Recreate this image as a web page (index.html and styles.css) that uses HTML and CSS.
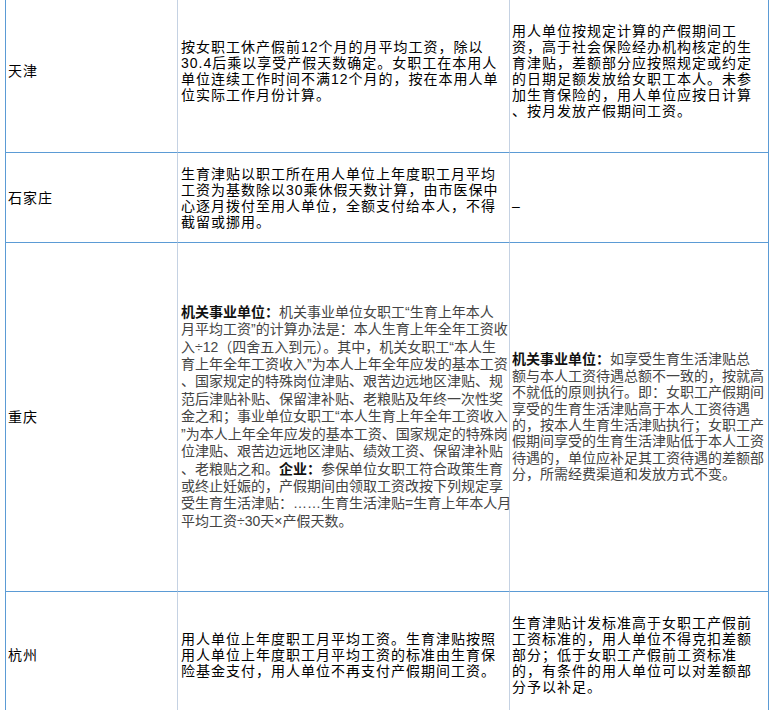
FILE: index.html
```html
<!DOCTYPE html>
<html lang="zh-CN">
<head>
<meta charset="utf-8">
<title>各地生育津贴计发标准</title>
<link rel="stylesheet" href="styles.css">
</head>
<body>
<div class="sheet">
  <div class="cell c1"><p class="txt">天津</p></div>
  <div class="cell c2"><p class="txt">按女职工休产假前12个月的月平均工资，除以<br>30.4后乘以享受产假天数确定。女职工在本用人<br>单位连续工作时间不满12个月的，按在本用人单<br>位实际工作月份计算。</p></div>
  <div class="cell c3"><p class="txt">用人单位按规定计算的产假期间工<br>资，高于社会保险经办机构核定的生<br>育津贴，差额部分应按照规定或约定<br>的日期足额发放给女职工本人。未参<br>加生育保险的，用人单位应按日计算<br>、按月发放产假期间工资。</p></div>

  <div class="cell c1"><p class="txt">石家庄</p></div>
  <div class="cell c2"><p class="txt">生育津贴以职工所在用人单位上年度职工月平均<br>工资为基数除以30乘休假天数计算，由市医保中<br>心逐月拨付至用人单位，全额支付给本人，不得<br>截留或挪用。</p></div>
  <div class="cell c3 low"><p class="txt">–</p></div>

  <div class="cell c1"><p class="txt">重庆</p></div>
  <div class="cell c2"><p class="txt rich tall"><b>机关事业单位：</b>机关事业单位女职工“生育上年本人<br>月平均工资”的计算办法是：本人生育上年全年工资收<br>入÷12（四舍五入到元）。其中，机关女职工“本人生<br>育上年全年工资收入”为本人上年全年应发的基本工资<br>、国家规定的特殊岗位津贴、艰苦边远地区津贴、规<br>范后津贴补贴、保留津补贴、老粮贴及年终一次性奖<br>金之和；事业单位女职工“本人生育上年全年工资收入<br>”为本人上年全年应发的基本工资、国家规定的特殊岗<br>位津贴、艰苦边远地区津贴、绩效工资、保留津补贴<br>、老粮贴之和。<b>企业：</b>参保单位女职工符合政策生育<br>或终止妊娠的，产假期间由领取工资改按下列规定享<br>受生育生活津贴：……生育生活津贴=生育上年本人月<br>平均工资÷30天×产假天数。</p></div>
  <div class="cell c3"><p class="txt rich"><b>机关事业单位：</b>如享受生育生活津贴总<br>额与本人工资待遇总额不一致的，按就高<br>不就低的原则执行。即：女职工产假期间<br>享受的生育生活津贴高于本人工资待遇<br>的，按本人生育生活津贴执行；女职工产<br>假期间享受的生育生活津贴低于本人工资<br>待遇的，单位应补足其工资待遇的差额部<br>分，所需经费渠道和发放方式不变。</p></div>

  <div class="cell c1"><p class="txt">杭州</p></div>
  <div class="cell c2"><p class="txt">用人单位上年度职工月平均工资。生育津贴按照<br>用人单位上年度职工月平均工资的标准由生育保<br>险基金支付，用人单位不再支付产假期间工资。</p></div>
  <div class="cell c3"><p class="txt">生育津贴计发标准高于女职工产假前<br>工资标准的，用人单位不得克扣差额<br>部分；低于女职工产假前工资标准<br>的，有条件的用人单位可以对差额部<br>分予以补足。</p></div>
</div>
</body>
</html>
```

FILE: styles.css
```css
html, body {
  margin: 0;
  padding: 0;
  background: #ffffff;
  overflow: hidden;
}

.sheet {
  display: grid;
  grid-template-columns: 172px 332px 259px;
  grid-template-rows: 164px 90px 349px 126px;
  width: max-content;
  margin: -11px 0 0 5px;
  border-left: 1px solid #5b9bd5;
}

.cell {
  display: flex;
  align-items: center;
  box-sizing: border-box;
  border-right: 1px solid #c5d2e3;
  border-bottom: 1px solid #5b9bd5;
  white-space: nowrap;
  overflow: hidden;
}

.c1 { padding-left: 2px; }
.c2 { padding-left: 3px; }
.c3 { padding-left: 2px; border-right-color: #5b9bd5; }

.low { padding-top: 16px; }

.txt {
  margin: 0;
  font-family: "Liberation Sans", "Noto Sans CJK SC", sans-serif;
  font-size: 14px;
  line-height: 16px;
  letter-spacing: 1px;
  color: #000000;
}

.rich {
  letter-spacing: 0;
  line-height: 16.4px;
  color: #444444;
}

.rich.tall {
  line-height: 17.4px;
}

.rich b {
  color: #111111;
  font-weight: 700;
}
```
